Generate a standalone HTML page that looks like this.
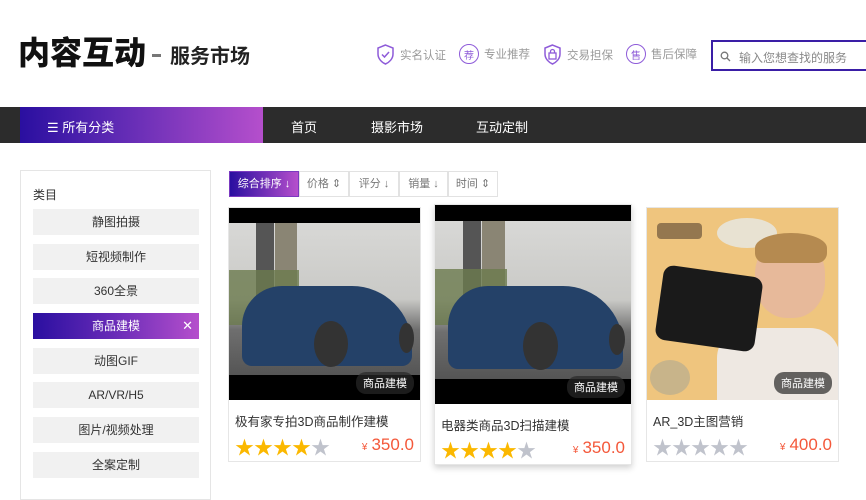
<!DOCTYPE html>
<html><head><meta charset="utf-8"><style>
*{margin:0;padding:0;box-sizing:border-box}
body{width:866px;height:486px;overflow:hidden;background:#fff;font-family:"Liberation Sans","Noto Sans CJK SC",sans-serif;position:relative}
.abs{position:absolute}
.logo{left:18px;top:28px;font-size:32px;font-weight:900;color:#111;letter-spacing:0;font-family:"Noto Sans CJK SC",sans-serif}
.sub{left:170px;top:40px;font-size:20px;font-weight:bold;color:#222;font-family:"Noto Sans CJK SC",sans-serif}
.feat{top:44px;font-size:11.5px;color:#999;display:flex;align-items:center;gap:5px}
.ic{width:20px;height:20px;border:1.5px solid #8e5bd9;border-radius:50%;font-size:10px;color:#8e5bd9;display:flex;align-items:center;justify-content:center}
.search{left:711px;top:40px;width:160px;height:31px;border:2px solid #3a1ea6;font-size:12px;color:#888;padding:7px 0 0 26px}
.nav{left:0;top:107px;width:866px;height:36px;background:#2c2c2c}
.all{left:20px;top:107px;width:243px;height:36px;background:linear-gradient(90deg,#2a0fa0,#5f2ab4 40%,#b54fcc);color:#fff;font-size:13px;padding:10px 0 0 27px}
.nv{top:117px;color:#fff;font-size:13px}
.side{left:20px;top:170px;width:191px;height:330px;border:1px solid #e5e5e5}
.cat{position:absolute;left:12px;width:166px;height:26px;background:#f1f1f1;font-size:12px;color:#333;text-align:center;line-height:26px}
.sel{background:linear-gradient(90deg,#2a0fa0,#6a2cb8 50%,#b54fcc);color:#fff}
.sort{top:171px;height:26px;border:1px solid #e2e2e2;font-size:11px;color:#777;text-align:center;line-height:24px}
.card{background:#fff;border:1px solid #e6e6e6}
.img{position:absolute;left:0;top:0;width:100%;overflow:hidden}
.tag{position:absolute;right:6px;bottom:6px;background:rgba(40,40,40,.7);color:#fff;font-size:11px;padding:3px 7px;border-radius:10px}
.title{position:absolute;left:6px;font-size:12.5px;color:#333}
.stars{position:absolute;left:6px;font-size:19px;letter-spacing:0;color:#fbb800}
.g{color:#c0c3cc}
.price{position:absolute;right:6px;font-size:17px;color:#f4583a}
.price small{font-size:10px;margin-right:4px}
</style></head><body>
<div class="abs logo">内容互动</div>
<div class="abs" style="left:152px;top:54px;width:9px;height:3px;background:#777"></div>
<div class="abs sub">服务市场</div>
<div class="abs feat" style="left:376px"><svg width="19" height="21" viewBox="0 0 19 21"><path d="M9.5 1L2 4v6c0 5 4 8.5 7.5 10C13 18.5 17 15 17 10V4z" fill="none" stroke="#8e5bd9" stroke-width="1.5"/><path d="M6 10.5l2.5 2.5 4.5-5" fill="none" stroke="#8e5bd9" stroke-width="1.5"/></svg>实名认证</div>
<div class="abs feat" style="left:459px"><span class="ic">荐</span>专业推荐</div>
<div class="abs feat" style="left:543px"><svg width="19" height="21" viewBox="0 0 19 21"><path d="M9.5 1L2 4v6c0 5 4 8.5 7.5 10C13 18.5 17 15 17 10V4z" fill="none" stroke="#8e5bd9" stroke-width="1.5"/><rect x="6" y="9" width="7" height="6" fill="none" stroke="#8e5bd9" stroke-width="1.3"/><path d="M7.5 9V7.5a2 2 0 014 0V9" fill="none" stroke="#8e5bd9" stroke-width="1.3"/></svg>交易担保</div>
<div class="abs feat" style="left:626px"><span class="ic">售</span>售后保障</div>
<div class="abs search"><svg class="abs" style="left:7px;top:9px" width="11" height="11" viewBox="0 0 11 11"><circle cx="4.5" cy="4.5" r="3.3" fill="none" stroke="#777" stroke-width="1.3"/><path d="M7 7l3 3" stroke="#777" stroke-width="1.3"/></svg>输入您想查找的服务</div>
<div class="abs nav"></div>
<div class="abs all">☰ 所有分类</div>
<div class="abs nv" style="left:291px">首页</div>
<div class="abs nv" style="left:371px">摄影市场</div>
<div class="abs nv" style="left:476px">互动定制</div>
<div class="abs side">
<div style="position:absolute;left:12px;top:15px;font-size:12px;color:#333">类目</div>
<div class="cat" style="top:38px">静图拍摄</div>
<div class="cat" style="top:73px">短视频制作</div>
<div class="cat" style="top:107px">360全景</div>
<div class="cat sel" style="top:142px">商品建模<span style="position:absolute;right:6px;font-size:13px">✕</span></div>
<div class="cat" style="top:177px">动图GIF</div>
<div class="cat" style="top:211px">AR/VR/H5</div>
<div class="cat" style="top:246px">图片/视频处理</div>
<div class="cat" style="top:281px">全案定制</div>
</div>
<div class="abs sort" style="left:229px;width:70px;background:linear-gradient(90deg,#2a0fa0,#b54fcc);color:#fff;border-color:#7a3ac0">综合排序 ↓</div>
<div class="abs sort" style="left:299px;width:50px">价格 ⇕</div>
<div class="abs sort" style="left:349px;width:50px">评分 ↓</div>
<div class="abs sort" style="left:399px;width:49px">销量 ↓</div>
<div class="abs sort" style="left:448px;width:50px">时间 ⇕</div>

<div class="abs card" style="left:228px;top:207px;width:193px;height:255px">
<div class="img" style="height:192px;background:#000">
<div style="position:absolute;top:15px;left:0;right:0;height:152px;background:linear-gradient(180deg,#d8d8d6,#c9c9c6 50%,#6f6f6f 70%,#555)"></div>
<div style="position:absolute;top:15px;left:27px;width:18px;height:95px;background:#555"></div>
<div style="position:absolute;top:15px;left:46px;width:22px;height:120px;background:#8a8574"></div>
<div style="position:absolute;top:62px;left:0;width:70px;height:55px;background:#6c7a4e;opacity:.8"></div>
<div style="position:absolute;top:78px;left:13px;width:170px;height:80px;background:#244168;border-radius:40px 60px 10px 10px"></div>
<div style="position:absolute;top:113px;left:85px;width:34px;height:46px;background:#333;border-radius:50%"></div>
<div style="position:absolute;top:115px;left:170px;width:15px;height:30px;background:#333;border-radius:50%"></div>
<span class="tag">商品建模</span></div>
<div class="title" style="top:203px">极有家专拍3D商品制作建模</div>
<div class="stars" style="top:225px">★★★★<span class="g">★</span></div>
<div class="price" style="top:227px"><small>¥</small>350.0</div>
</div>

<div class="abs card" style="left:434px;top:204px;width:198px;height:261px;box-shadow:0 3px 6px rgba(0,0,0,.18)">
<div class="img" style="height:199px;background:#000">
<div style="position:absolute;top:16px;left:0;right:0;height:158px;background:linear-gradient(180deg,#d8d8d6,#c9c9c6 50%,#6f6f6f 70%,#555)"></div>
<div style="position:absolute;top:16px;left:28px;width:18px;height:98px;background:#555"></div>
<div style="position:absolute;top:16px;left:47px;width:23px;height:125px;background:#8a8574"></div>
<div style="position:absolute;top:64px;left:0;width:72px;height:56px;background:#6c7a4e;opacity:.8"></div>
<div style="position:absolute;top:81px;left:13px;width:175px;height:83px;background:#244168;border-radius:40px 60px 10px 10px"></div>
<div style="position:absolute;top:117px;left:88px;width:35px;height:48px;background:#333;border-radius:50%"></div>
<div style="position:absolute;top:119px;left:174px;width:16px;height:31px;background:#333;border-radius:50%"></div>
<span class="tag">商品建模</span></div>
<div class="title" style="top:210px">电器类商品3D扫描建模</div>
<div class="stars" style="top:231px">★★★★<span class="g">★</span></div>
<div class="price" style="top:233px"><small>¥</small>350.0</div>
</div>

<div class="abs card" style="left:646px;top:207px;width:193px;height:255px">
<div class="img" style="height:192px;background:#efc57e">
<div style="position:absolute;left:70px;top:10px;width:60px;height:30px;background:#e8e2d2;border-radius:50%"></div>
<div style="position:absolute;left:108px;top:30px;width:70px;height:80px;background:#e7b99a;border-radius:45%"></div>
<div style="position:absolute;left:108px;top:25px;width:72px;height:30px;background:#b58a50;border-radius:50% 50% 10px 10px"></div>
<div style="position:absolute;left:70px;top:120px;width:123px;height:72px;background:#eee8e2;border-radius:30px 30px 0 0"></div>
<div style="position:absolute;left:12px;top:63px;width:100px;height:75px;background:#1a1a1a;border-radius:10px;transform:rotate(8deg)"></div>
<div style="position:absolute;left:3px;top:152px;width:40px;height:35px;background:#c8b48a;border-radius:50%"></div>
<div style="position:absolute;left:10px;top:15px;width:45px;height:16px;background:#3a2a20;opacity:.5;border-radius:4px"></div>
<span class="tag">商品建模</span></div>
<div class="title" style="top:203px">AR_3D主图营销</div>
<div class="stars g" style="top:225px">★★★★★</div>
<div class="price" style="top:227px"><small>¥</small>400.0</div>
</div>
</body></html>
